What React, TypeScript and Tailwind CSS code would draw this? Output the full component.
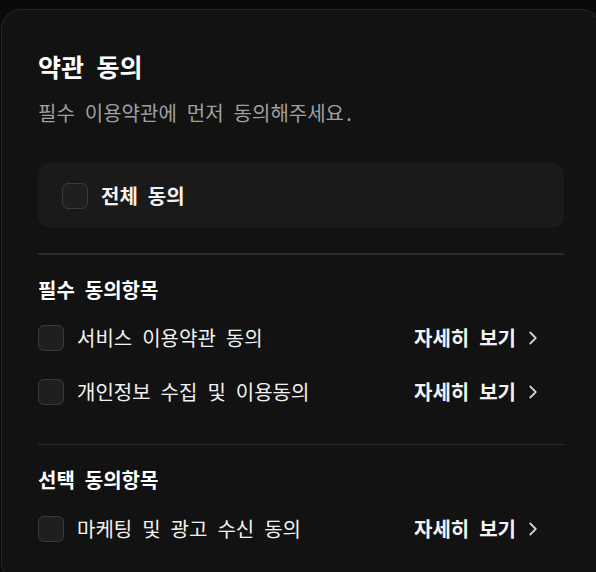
import React, { useState } from 'react';
import { ChevronRight } from 'lucide-react';

type Term = { id: string; label: string; required: boolean };

const terms: Term[] = [
  { id: 'service', label: '서비스 이용약관 동의', required: true },
  { id: 'privacy', label: '개인정보 수집 및 이용동의', required: true },
  { id: 'marketing', label: '마케팅 및 광고 수신 동의', required: false },
];

const Box = ({ checked, onClick }: { checked: boolean; onClick: () => void }) => (
  <button
    type="button"
    onClick={onClick}
    className={`w-[26px] h-[26px] shrink-0 rounded-[6px] border ${
      checked ? 'bg-white border-white' : 'bg-[#1f1f1f] border-[#3a3a3a]'
    }`}
  />
);

const TermRow = ({ term, checked, onToggle }: { term: Term; checked: boolean; onToggle: () => void }) => (
  <div className="flex items-center justify-between h-[26px]">
    <div className="flex items-center gap-[13px]">
      <Box checked={checked} onClick={onToggle} />
      <span className="text-[20px] text-[#f2f2f2] leading-[26px]">{term.label}</span>
    </div>
    <button type="button" className="flex items-center gap-[6px] mr-5 text-[20px] font-semibold text-[#f2f2f2] leading-[26px]">
      <span>자세히 보기</span>
      <ChevronRight className="w-[22px] h-[22px] text-[#cfcfcf]" strokeWidth={2} />
    </button>
  </div>
);

export default function App() {
  const [checked, setChecked] = useState<Record<string, boolean>>({});
  const allChecked = terms.every((t) => checked[t.id]);

  const toggle = (id: string) => setChecked((c) => ({ ...c, [id]: !c[id] }));
  const toggleAll = () => {
    const next: Record<string, boolean> = {};
    terms.forEach((t) => (next[t.id] = !allChecked));
    setChecked(next);
  };

  return (
    <div className="min-h-screen bg-[#0a0a0a] overflow-hidden pt-[9px] pl-px font-['Noto_Sans_Mono_CJK_KR','Noto_Sans_CJK_KR',sans-serif]">
      <div className="w-[600px] rounded-[20px] border border-[#262626] bg-[#121212] px-9 pt-[40px] pb-10">
        <h1 className="text-[25px] font-bold text-white leading-8">약관 동의</h1>
        <p className="mt-[17px] text-[20px] text-[#a0a0a0] leading-7">필수 이용약관에 먼저 동의해주세요.</p>

        {/* 전체 동의 */}
        <div className="mt-9 h-[65px] rounded-xl bg-[#1a1a1a] px-6 flex items-center gap-[13px]">
          <Box checked={allChecked} onClick={toggleAll} />
          <span className="text-[20px] font-semibold text-[#f2f2f2]">전체 동의</span>
        </div>

        <div className="mt-[25px] h-[2px] bg-[#2a2a2a]" />

        <h2 className="mt-[21px] text-[20px] font-semibold text-white leading-7">필수 동의항목</h2>
        <div className="mt-[21px] flex flex-col gap-7">
          {terms.filter((t) => t.required).map((t) => (
            <TermRow key={t.id} term={t} checked={!!checked[t.id]} onToggle={() => toggle(t.id)} />
          ))}
        </div>

        <div className="mt-[39px] h-px bg-[#2a2a2a]" />

        <h2 className="mt-[21px] text-[20px] font-semibold text-white leading-7">선택 동의항목</h2>
        <div className="mt-[22px] flex flex-col gap-7">
          {terms.filter((t) => !t.required).map((t) => (
            <TermRow key={t.id} term={t} checked={!!checked[t.id]} onToggle={() => toggle(t.id)} />
          ))}
        </div>
      </div>
    </div>
  );
}
